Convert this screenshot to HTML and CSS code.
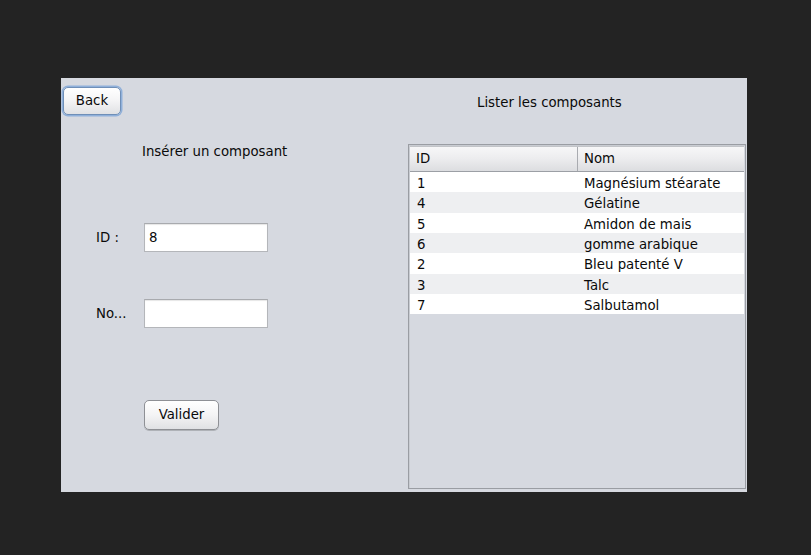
FILE: index.html
```html
<!DOCTYPE html>
<html lang="fr">
<head>
<meta charset="utf-8">
<title>Composants</title>
<link rel="stylesheet" href="styles.css">
</head>
<body>
<div class="window">
  <div class="left">
    <button class="btn back">Back</button>
    <div class="title insert-title">Insérer un composant</div>
    <div class="field-row first">
      <span class="label">ID :</span>
      <input class="input" type="text" value="8">
    </div>
    <div class="field-row second">
      <span class="label">No...</span>
      <input class="input" type="text" value="">
    </div>
    <button class="btn valider">Valider</button>
  </div>
  <div class="right">
    <div class="title list-title">Lister les composants</div>
    <div class="scroll">
      <div class="thead">
        <div class="th c1">ID</div>
        <div class="th c2">Nom</div>
      </div>
      <div class="tbody">
        <div class="tr"><span class="c1">1</span><span class="c2">Magnésium stéarate</span></div>
        <div class="tr"><span class="c1">4</span><span class="c2">Gélatine</span></div>
        <div class="tr"><span class="c1">5</span><span class="c2">Amidon de mais</span></div>
        <div class="tr"><span class="c1">6</span><span class="c2">gomme arabique</span></div>
        <div class="tr"><span class="c1">2</span><span class="c2">Bleu patenté V</span></div>
        <div class="tr"><span class="c1">3</span><span class="c2">Talc</span></div>
        <div class="tr"><span class="c1">7</span><span class="c2">Salbutamol</span></div>
      </div>
    </div>
  </div>
</div>
</body>
</html>
```
FILE: styles.css
```css
* { box-sizing: border-box; }
html, body { margin: 0; padding: 0; }
body {
  background: #232323;
  width: 811px;
  height: 555px;
  overflow: hidden;
  font-family: "DejaVu Sans", "Liberation Sans", sans-serif;
  font-size: 13.3px;
  color: #0a0a0a;
}
.window {
  margin: 78px 0 0 61px;
  width: 686px;
  height: 414px;
  background: #d6d9e0;
  display: flex;
}
.left {
  width: 347px;
  display: flex;
  flex-direction: column;
  align-items: flex-start;
}
.right {
  flex: 1;
  display: flex;
  flex-direction: column;
  align-items: flex-start;
}
.title {
  line-height: 16px;
  height: 16px;
  white-space: nowrap;
}
.btn {
  font-family: inherit;
  font-size: 13.3px;
  color: #0a0a0a;
  line-height: 16px;
  padding: 0;
  border: 1px solid #8e9095;
  border-radius: 5px;
  background: linear-gradient(#ffffff 0%, #f4f4f5 50%, #e0e1e4 100%);
  box-shadow: 0 1px 0 rgba(0,0,0,0.18);
}
.back {
  margin: 9px 0 0 2px;
  width: 58px;
  height: 28px;
  box-shadow: 0 0 0 1.5px #8fb0da;
  border-color: #6f8fb8;
}
.insert-title {
  margin: 29px 0 0 81px;
}
.field-row {
  display: flex;
  align-items: center;
  height: 29px;
}
.field-row.first { margin-top: 63px; }
.field-row.second { margin-top: 47px; }
.label {
  width: 48px;
  margin-left: 35px;
}
.input {
  width: 124px;
  height: 29px;
  margin: 0;
  border: 1px solid #b4b6ba;
  border-top-color: #a8aaae;
  background: #fff;
  font-family: inherit;
  font-size: 13.3px;
  color: #0a0a0a;
  padding: 0 0 0 4px;
  box-shadow: inset 0 1px 1px rgba(0,0,0,0.1);
  outline: none;
}
.valider {
  margin: 72px 0 0 83px;
  width: 75px;
  height: 30px;
}
.list-title {
  margin: 17px 0 0 69px;
}
.scroll {
  margin-top: 33px;
  width: 338px;
  height: 345px;
  border: 1px solid #9a9da3;
  box-shadow: inset 1px 1px 0 #c9ccd2;
  background: #d6d9e0;
  padding: 1px 1px 0 1px;
}
.thead {
  display: flex;
  height: 26px;
  background: linear-gradient(#f7f7f8 0%, #ececee 50%, #dcdde0 100%);
  border-bottom: 1px solid #9c9fa5;
  border-top: 1px solid #c2c4c8;
}
.th {
  line-height: 24px;
}
.th.c1 {
  width: 168px;
  padding-left: 6px;
  border-right: 1px solid #a9abb0;
}
.th.c2 { padding-left: 6px; }
.tbody { display: flex; flex-direction: column; }
.tr {
  display: flex;
  height: 20.33px;
  line-height: 18px;
  padding-top: 3px;
  background: #fff;
}
.tr:nth-child(even) { background: #eeeff1; }
.tr .c1 { width: 168px; padding-left: 7px; }
.tr .c2 { padding-left: 6px; }
```
